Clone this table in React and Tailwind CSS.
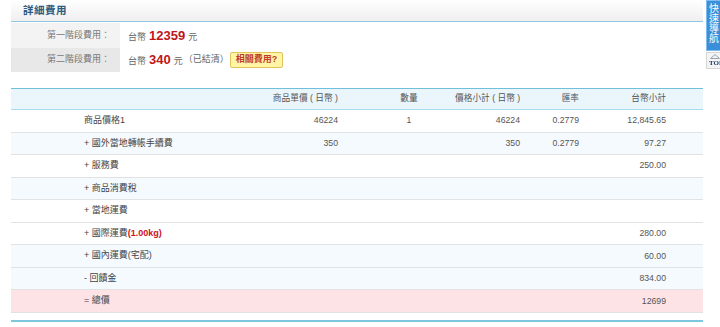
import React from 'react';

const font = { fontFamily: '"Liberation Sans", "Noto Sans CJK TC", sans-serif' };

const rows = [
  { label: '商品價格1', price: '46224', qty: '1', sub: '46224', rate: '0.2779', twd: '12,845.65', bg: 'bg-white' },
  { label: '+ 國外當地轉帳手續費', price: '350', qty: '', sub: '350', rate: '0.2779', twd: '97.27', bg: 'bg-[#f5fafe]' },
  { label: '+ 服務費', twd: '250.00', bg: 'bg-white' },
  { label: '+ 商品消費稅', twd: '', bg: 'bg-[#f5fafe]' },
  { label: '+ 當地運費', twd: '', bg: 'bg-white' },
  { label: '+ 國際運費', extra: '(1.00kg)', twd: '280.00', bg: 'bg-white' },
  { label: '+ 國內運費(宅配)', twd: '60.00', bg: 'bg-[#f5fafe]' },
  { label: '- 回饋金', twd: '834.00', bg: 'bg-[#f5fafe]' },
  { label: '= 總價', twd: '12699', bg: 'bg-[#fde3e5]' },
];

const grid = 'grid grid-cols-[239px_113px_92px_75px_59px_87px_27px] items-center';

const App = () => {
  return (
    <div className="relative w-[720px] h-[327px] bg-white overflow-hidden text-[#555]" style={font}>
      <div className="ml-[11px] w-[692px]">
        {/* title bar */}
        <div className="h-[22px] flex items-center pl-[12px] bg-gradient-to-b from-white to-[#efefef] border-b-[1.5px] border-[#8cc8df]">
          <span className="text-[10.5px] font-bold text-[#2d5a80] tracking-[0.5px]">詳細費用</span>
        </div>

        {/* stage fees */}
        <div className="mt-[1px]">
          <div className="flex h-[25px] items-center">
            <div className="w-[109px] h-full bg-[#f3f3f3] flex items-center justify-end pr-[10px] text-[9px] text-[#777]">
              第一階段費用：
            </div>
            <div className="pl-[8px] flex items-baseline gap-[3px] text-[9px] text-[#666]">
              <span>台幣</span>
              <span className="text-[13px] font-bold text-[#c0151b]">12359</span>
              <span>元</span>
            </div>
          </div>
          <div className="flex h-[24px] items-center">
            <div className="w-[109px] h-full bg-[#e8e8e8] flex items-center justify-end pr-[10px] text-[9px] text-[#777]">
              第二階段費用：
            </div>
            <div className="pl-[8px] flex items-center text-[9px] text-[#666]">
              <span className="flex items-baseline gap-[3px]">
                <span>台幣</span>
                <span className="text-[13px] font-bold text-[#c0151b]">340</span>
                <span>元</span>
              </span>
              <span className="ml-[1px]">（已結清）</span>
              <span className="ml-[1px] h-[16px] px-[5px] flex items-center rounded-[2px] border border-[#e2c35a] bg-[#fff5a5] text-[9px] font-bold text-[#c0392b]">
                相關費用?
              </span>
            </div>
          </div>
        </div>

        {/* detail table */}
        <div className="mt-[16px] text-[8.7px]">
          <div className={`${grid} h-[22px] bg-[#eaf6fc] border-t border-[#70c0dc] border-b-[1.5px] border-b-[#a9dcef]`}>
            <div />
            <div className="text-right pr-[25px] whitespace-nowrap">商品單價 ( 日幣 )</div>
            <div className="text-center">數量</div>
            <div className="text-right pr-[10px] whitespace-nowrap">價格小計 ( 日幣 )</div>
            <div className="text-right pr-[10px]">匯率</div>
            <div className="text-right pr-[10px]">台幣小計</div>
            <div />
          </div>
          {rows.map((r, i) => (
            <div key={i} className={`${grid} h-[22.55px] border-b border-[#e2e2e2] ${r.bg}`}>
              <div className="pl-[73px] text-[9px] text-[#444] whitespace-nowrap">
                {r.label}
                {r.extra && <span className="font-bold text-[#d0101b]">{r.extra}</span>}
              </div>
              <div className="text-right pr-[25px]">{r.price}</div>
              <div className="text-center">{r.qty}</div>
              <div className="text-right pr-[10px]">{r.sub}</div>
              <div className="text-right pr-[10px]">{r.rate}</div>
              <div className="text-right pr-[10px]">{r.twd}</div>
              <div />
            </div>
          ))}
          <div className="mt-[7px] h-[2px] bg-[#7ec8df]" />
        </div>
      </div>

      {/* side quick nav */}
      <div className="fixed left-[706px] top-0 w-[24px]">
        <div className="h-[51px] bg-[#3a8fd8] border border-[#7fbdf0] pl-[2px] pt-[3px] flex flex-col text-white text-[10px] leading-[10px] gap-[0px]">
          <span>快</span>
          <span>速</span>
          <span>導</span>
          <span>航</span>
        </div>
        <div className="mt-[1px] h-[17px] bg-[#f4f4f4] border border-[#d6d6d6] flex flex-col items-start pl-[2px]">
          <svg width="10" height="5" viewBox="0 0 10 5" className="mt-[1px] ml-[1px]">
            <path d="M0.5 4.5 L5 0.5 L9.5 4.5 Z" fill="none" stroke="#9aa4b0" strokeWidth="1" />
          </svg>
          <span className="text-[7px] leading-[8px] font-bold text-[#1f3c6e]" style={{ fontFamily: '"Liberation Serif", serif' }}>
            TOP
          </span>
        </div>
      </div>
    </div>
  );
};

export default App;
